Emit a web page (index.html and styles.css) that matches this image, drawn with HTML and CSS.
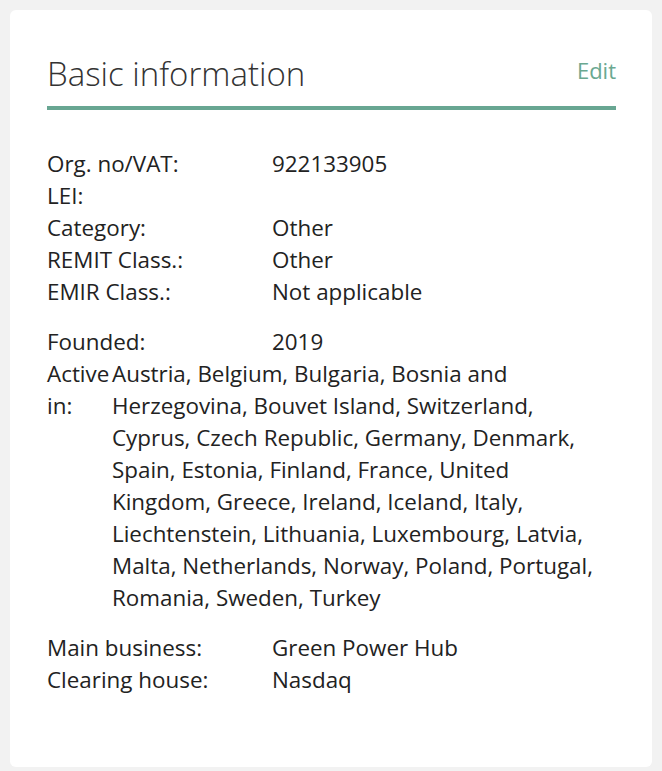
FILE: index.html
```html
<!DOCTYPE html>
<html>
<head>
  <meta charset="utf-8">
  <meta name="viewport" content="width=device-width, initial-scale=1">
  <title>Basic information</title>
  <link rel="stylesheet" href="styles.css">
</head>
<body>
  <div class="card">
    <div class="card-header">
      <h2>Basic information</h2>
      <a href="#" class="edit">Edit</a>
    </div>

    <table class="info">
      <tr><td class="label">Org. no/VAT:</td><td>922133905</td></tr>
      <tr><td class="label">LEI:</td><td></td></tr>
      <tr><td class="label">Category:</td><td>Other</td></tr>
      <tr><td class="label">REMIT Class.:</td><td>Other</td></tr>
      <tr><td class="label">EMIR Class.:</td><td>Not applicable</td></tr>
    </table>

    <table class="info">
      <tr><td class="label">Founded:</td><td>2019</td></tr>
    </table>
    <table class="info countries">
      <tr>
        <td class="label">Active in:</td>
        <td>Austria, Belgium, Bulgaria, Bosnia and Herzegovina, Bouvet Island, Switzerland, Cyprus, Czech Republic, Germany, Denmark, Spain, Estonia, Finland, France, United Kingdom, Greece, Ireland, Iceland, Italy, Liechtenstein, Lithuania, Luxembourg, Latvia, Malta, Netherlands, Norway, Poland, Portugal, Romania, Sweden, Turkey</td>
      </tr>
    </table>

    <table class="info">
      <tr><td class="label">Main business:</td><td>Green Power Hub</td></tr>
      <tr><td class="label">Clearing house:</td><td>Nasdaq</td></tr>
    </table>
  </div>
</body>
</html>
```

FILE: styles.css
```css
body {
  font-family: "Open Sans", Arial, sans-serif;
  margin: 0;
  padding: 10px;
  background-color: #f2f2f2;
  color: #222;
}

.card {
  box-sizing: border-box;
  height: 757px;
  background-color: #fff;
  border-radius: 6px;
  padding: 44px 36px 0 37px;
}

.card-header {
  display: flex;
  justify-content: space-between;
  align-items: flex-start;
  border-bottom: 4px solid #68a692;
  padding-bottom: 12px;
  margin-bottom: 38px;
}

h2 {
  margin: 0;
  font-size: 33px;
  font-weight: 300;
  color: #333;
  line-height: 40px;
}

.edit {
  color: #6aa891;
  text-decoration: none;
  font-size: 22px;
  line-height: 32px;
}

.info {
  border-collapse: collapse;
  font-size: 22.4px;
  line-height: 32px;
  margin-bottom: 18px;
}

.info td {
  padding: 0;
  vertical-align: top;
}

.info .label {
  width: 225px;
}

.countries {
  margin-top: -18px;
}

.countries .label {
  width: 65px;
}

.countries td:last-child {
  width: 492px;
}
```
